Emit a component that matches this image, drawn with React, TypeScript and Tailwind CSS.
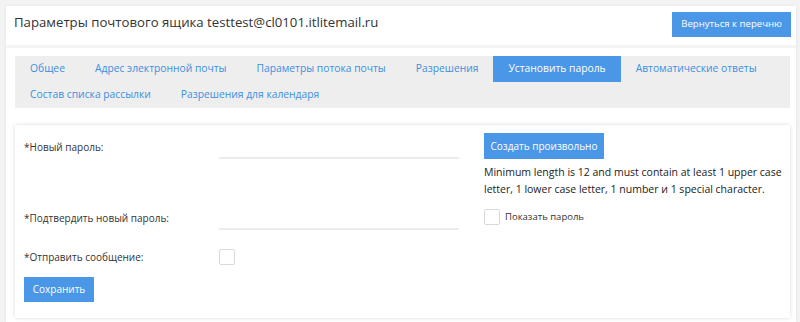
import { useState } from "react";

const tabsRow1 = [
  "Общее",
  "Адрес электронной почты",
  "Параметры потока почты",
  "Разрешения",
  "Установить пароль",
  "Автоматические ответы",
];
const tabsRow2 = ["Состав списка рассылки", "Разрешения для календаря"];

const Tab = ({ label, active }: { label: string; active?: boolean }) => (
  <div
    className={`px-[15px] h-[26px] flex items-center whitespace-nowrap ${
      active ? "bg-[#4a97e8] text-white" : "text-[#3d8fe0]"
    }`}
  >
    {label}
  </div>
);

const Box = ({ checked, onClick }: { checked?: boolean; onClick?: () => void }) => (
  <button
    onClick={onClick}
    className="w-[16px] h-[16px] border border-[#d9d9d9] rounded-[2px] bg-white flex items-center justify-center text-[10px] text-[#4a97e8]"
  >
    {checked ? "✓" : null}
  </button>
);

export default function App() {
  const [show, setShow] = useState(false);
  const [notify, setNotify] = useState(false);

  return (
    <div
      className="w-[800px] h-[322px] bg-[#f3f3f3] pl-[6px] pr-[4px] pt-[6px] text-[#333]"
      style={{ fontFamily: '"Open Sans", "Noto Sans", sans-serif' }}
    >
      <div className="bg-white h-full shadow-[0_0_3px_rgba(0,0,0,0.08)]">
        <div className="flex items-start justify-between pl-[8px] pr-[5px] h-[39px]">
          <h1 className="text-[13.2px] leading-[18px] mt-[7px] text-[#333]">
            Параметры почтового ящика testtest@cl0101.itlitemail.ru
          </h1>
          <button className="bg-[#4a97e8] text-white text-[9.6px] px-[9px] h-[25px] mt-[6px]">
            Вернуться к перечню
          </button>
        </div>
        <div className="h-[3px] bg-[#f5f5f5]" />

        <div className="ml-[9px] mr-[6px] mt-[8px] bg-[#eeeeee] h-[52px] flex flex-col">
          <div className="flex text-[10.3px]">
            {tabsRow1.map((t) => (
              <Tab key={t} label={t} active={t === "Установить пароль"} />
            ))}
          </div>
          <div className="flex text-[10.3px]">
            {tabsRow2.map((t) => (
              <Tab key={t} label={t} />
            ))}
          </div>
        </div>

        <div className="ml-[9px] mr-[6px] mt-[17px] h-[193px] bg-white shadow-[0_0_4px_rgba(0,0,0,0.15)] pl-[9px] pt-[8px] flex">
          <div className="w-[460px] flex flex-col text-[10px]">
            <div className="flex items-center h-[26px]">
              <div className="w-[195px] pt-[2px]">*Новый пароль:</div>
              <div className="w-[240px] h-[26px] border-b-2 border-[#ececec]" />
            </div>
            <div className="flex items-center h-[26px] mt-[45px]">
              <div className="w-[195px] pt-[2px]">*Подтвердить новый пароль:</div>
              <div className="w-[240px] h-[26px] border-b-2 border-[#ececec]" />
            </div>
            <div className="flex items-center h-[16px] mt-[19px]">
              <div className="w-[195px]">*Отправить сообщение:</div>
              <Box checked={notify} onClick={() => setNotify(!notify)} />
            </div>
            <button className="bg-[#4a97e8] text-white text-[10px] w-[70px] h-[25px] mt-[12px]">
              Сохранить
            </button>
          </div>

          <div className="flex flex-col">
            <button className="bg-[#4a97e8] text-white text-[10px] w-[120px] h-[26px]">
              Создать произвольно
            </button>
            <p className="mt-[5px] leading-[17px] w-[300px] text-[10.5px] text-[#222]">
              Minimum length is 12 and must contain at least 1 upper case letter, 1
              lower case letter, 1 number и 1 special character.
            </p>
            <label className="flex items-center gap-[5px] mt-[11px] text-[9.5px]">
              <Box checked={show} onClick={() => setShow(!show)} />
              Показать пароль
            </label>
          </div>
        </div>
      </div>
    </div>
  );
}
